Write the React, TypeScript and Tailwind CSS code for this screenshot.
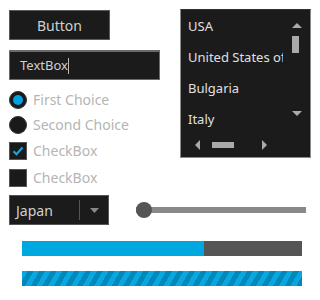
import React from 'react';

const font = { fontFamily: '"Noto Sans", "Open Sans", sans-serif' };

const Radio = ({ checked, label }: { checked?: boolean; label: string }) => (
  <div className="flex items-center h-[25px]">
    <span className="w-[18px] h-[18px] rounded-full bg-[#1a1a1a] border border-[#333] flex items-center justify-center">
      {checked && <span className="w-[10px] h-[10px] rounded-full bg-[#00a3dd]" />}
    </span>
    <span className="ml-[6px] text-[14px] text-[#b5b5b5]">{label}</span>
  </div>
);

const Check = ({ checked, label }: { checked?: boolean; label: string }) => (
  <div className="flex items-center h-[27px]">
    <span className="w-[18px] h-[18px] bg-[#1a1a1a] border border-[#555] flex items-center justify-center">
      {checked && (
        <svg width="12" height="10" viewBox="0 0 12 10">
          <path d="M1.5 5.2 L4.5 8.2 L10.5 1.5" stroke="#1aa3e0" strokeWidth="2.2" fill="none" />
        </svg>
      )}
    </span>
    <span className="ml-[6px] text-[14px] text-[#b5b5b5]">{label}</span>
  </div>
);

const countries = ['USA', 'United States of America', 'Bulgaria', 'Italy'];

export default function App() {
  return (
    <div className="w-[320px] h-[300px] bg-white overflow-hidden" style={font}>
      <div className="flex">
        <div className="pl-[9px] pt-[10px] w-[171px]">
          <button className="w-[101px] h-[30px] bg-[#1b1b1b] border border-[#5a5a5a] text-[14px] text-[#d0d0d0]">
            Button
          </button>
          <div className="mt-[10px] w-[151px] h-[30px] bg-[#1b1b1b] border border-[#6a6a6a] border-t-2 flex items-center pl-[10px] text-[13px] text-[#cfcfcf]">
            TextBox<span className="w-px h-[16px] bg-[#bbb]" />
          </div>
          <div className="mt-[7px]">
            <Radio checked label="First Choice" />
            <Radio label="Second Choice" />
            <Check checked label="CheckBox" />
            <Check label="CheckBox" />
          </div>
        </div>
        <div className="ml-[9px] mt-[9px] w-[131px] h-[149px] bg-[#1b1b1b] border border-[#8a8a8a] border-t-[#333] flex flex-col">
          <div className="flex flex-1">
            <div className="w-[102px] overflow-hidden pt-[1px]">
              {countries.map((c) => (
                <div key={c} className="h-[31px] flex items-center pl-[7px] text-[13px] text-[#e0e0e0] whitespace-nowrap">
                  {c}
                </div>
              ))}
            </div>
            <div className="flex-1 flex flex-col items-center pt-[12px]">
              <svg width="10" height="6" viewBox="0 0 10 6"><path d="M0 6 L5 1 L10 6 Z" fill="#aaa" /></svg>
              <span className="mt-[8px] ml-[-2px] w-[7px] h-[17px] bg-[#aaa]" />
              <svg className="mt-[58px]" width="10" height="6" viewBox="0 0 10 6"><path d="M0 0 L10 0 L5 5 Z" fill="#aaa" /></svg>
            </div>
          </div>
          <div className="h-[28px] flex items-center pl-[13px] pb-[2px]">
            <svg width="6" height="10" viewBox="0 0 6 10"><path d="M6 0 L6 10 L1 5 Z" fill="#aaa" /></svg>
            <span className="ml-[12px] w-[22px] h-[6px] bg-[#aaa]" />
            <svg className="ml-[28px]" width="6" height="10" viewBox="0 0 6 10"><path d="M0 0 L5 5 L0 10 Z" fill="#aaa" /></svg>
          </div>
        </div>
      </div>
      <div className="flex items-center pl-[9px] mt-[4px]">
        <div className="w-[100px] h-[30px] bg-[#1b1b1b] border border-[#555] flex items-center text-[14px] text-[#d0d0d0]">
          <span className="pl-[6px] w-[69px]">Japan</span>
          <span className="w-px h-[20px] bg-[#555]" />
          <svg className="ml-[10px]" width="9" height="5" viewBox="0 0 9 5"><path d="M0 0 L9 0 L4.5 5 Z" fill="#888" /></svg>
        </div>
        <div className="relative ml-[27px] w-[170px] h-[16px] flex items-center">
          <span className="w-full h-[6px] bg-[#888]" />
          <span className="absolute left-0 w-[16px] h-[16px] rounded-full bg-[#555]" />
        </div>
      </div>
      <div className="ml-[22px] mt-[16px] w-[280px] h-[15px] bg-[#555] flex">
        <span className="w-[182px] h-full bg-[#00a8e0]" />
      </div>
      <div className="ml-[22px] mt-[15px] w-[280px] h-[15px] bg-[repeating-linear-gradient(120deg,#0aa6df_0px,#0aa6df_5px,#0088b8_5px,#0088b8_10px)]" />
    </div>
  );
}
